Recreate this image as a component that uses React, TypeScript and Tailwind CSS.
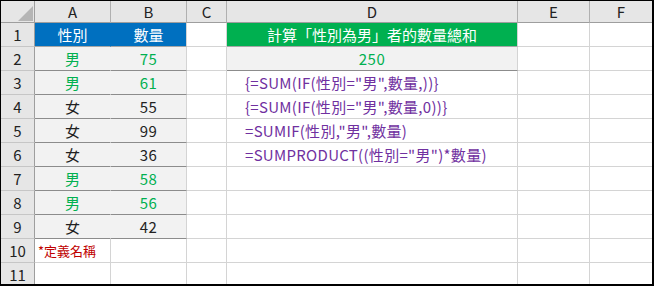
import React from "react";

const FONT = { fontFamily: '"Noto Sans CJK TC", "Noto Sans", sans-serif' };

const cols = ["A", "B", "C", "D", "E", "F"];
const data: [string, string][] = [
  ["男", "75"],
  ["男", "61"],
  ["女", "55"],
  ["女", "99"],
  ["女", "36"],
  ["男", "58"],
  ["男", "56"],
  ["女", "42"],
];
const formulas = [
  "{=SUM(IF(性別=\"男\",數量,))}",
  "{=SUM(IF(性別=\"男\",數量,0))}",
  "=SUMIF(性別,\"男\",數量)",
  "=SUMPRODUCT((性別=\"男\")*數量)",
];

function Cell({ className = "", children }: { className?: string; children?: React.ReactNode }) {
  return (
    <div className={`border-r border-b border-[#d4d4d4] flex items-center overflow-hidden whitespace-nowrap ${className}`}>
      {children}
    </div>
  );
}

export default function App() {
  const rows: React.ReactNode[] = [];
  for (let r = 1; r <= 11; r++) {
    const rh = (
      <div
        key={`rh${r}`}
        className="border-r border-b border-r-[#9e9e9e] border-b-[#c6c6c6] bg-[#e6e6e6] flex items-center justify-center text-[15px] text-[#222]"
      >
        {r}
      </div>
    );
    let a: React.ReactNode, b: React.ReactNode, d: React.ReactNode;
    if (r === 1) {
      a = (
        <Cell key="a" className="bg-[#0070c0] border-b-[#a6a6a6] border-r-[#0070c0] justify-center text-white text-[15px]">
          性別
        </Cell>
      );
      b = (
        <Cell key="b" className="bg-[#0070c0] border-b-[#a6a6a6] justify-center text-white text-[15px]">
          數量
        </Cell>
      );
    } else if (r >= 2 && r <= 9) {
      const [g, n] = data[r - 2];
      const col = g === "男" ? "text-[#00b050]" : "text-[#222]";
      a = (
        <Cell key="a" className={`bg-[#f2f2f2] border-b-[#8c8c8c] border-r-[#f2f2f2] justify-center text-[15px] ${col}`}>
          {g}
        </Cell>
      );
      b = (
        <Cell key="b" className={`bg-[#f2f2f2] border-b-[#8c8c8c] justify-center text-[15px] tracking-[0.5px] ${col}`}>
          {n}
        </Cell>
      );
    } else if (r === 10) {
      a = (
        <Cell key="a" className="pl-[3px] text-[13px] text-[#c00000]">
          *定義名稱
        </Cell>
      );
      b = <Cell key="b" />;
    } else {
      a = <Cell key="a" />;
      b = <Cell key="b" />;
    }
    if (r === 1) {
      d = (
        <Cell key="d" className="bg-[#00b050] border-b-[#a6a6a6] justify-center text-white text-[15px]">
          計算「性別為男」者的數量總和
        </Cell>
      );
    } else if (r === 2) {
      d = (
        <Cell key="d" className="bg-[#f2f2f2] border-b-[#8c8c8c] justify-center text-[#00b050] text-[15px] tracking-[0.5px]">
          250
        </Cell>
      );
    } else if (r >= 3 && r <= 6) {
      d = (
        <Cell key="d" className="pl-[18px] text-[#7030a0] text-[15px] tracking-[0.3px]">
          {formulas[r - 3]}
        </Cell>
      );
    } else {
      d = <Cell key="d" />;
    }
    rows.push(
      <React.Fragment key={r}>
        {rh}
        {a}
        {b}
        <Cell key="c" />
        {d}
        <Cell key="e" />
        <Cell key="f" />
      </React.Fragment>
    );
  }

  return (
    <div
      className="w-[654px] h-[286px] overflow-hidden bg-white border-l border-t border-r-2 border-b-2 border-black"
      style={FONT}
    >
      <div className="grid grid-cols-[34px_76px_76px_40px_291px_72px_63px] grid-rows-[22px_repeat(11,24px)] leading-none">
        <div className="relative bg-[#e6e6e6] border-r border-b border-[#9e9e9e]">
          <svg className="absolute left-[17px] top-[5px]" width="15" height="15" viewBox="0 0 15 15">
            <polygon points="15,0 15,15 0,15" fill="#b5b5b5" />
          </svg>
        </div>
        {cols.map((c) => (
          <div
            key={c}
            className="bg-[#e6e6e6] border-r border-b border-r-[#b0b0b0] border-b-[#9e9e9e] flex items-center justify-center text-[15px] text-[#222]"
          >
            {c}
          </div>
        ))}
        {rows}
      </div>
    </div>
  );
}
